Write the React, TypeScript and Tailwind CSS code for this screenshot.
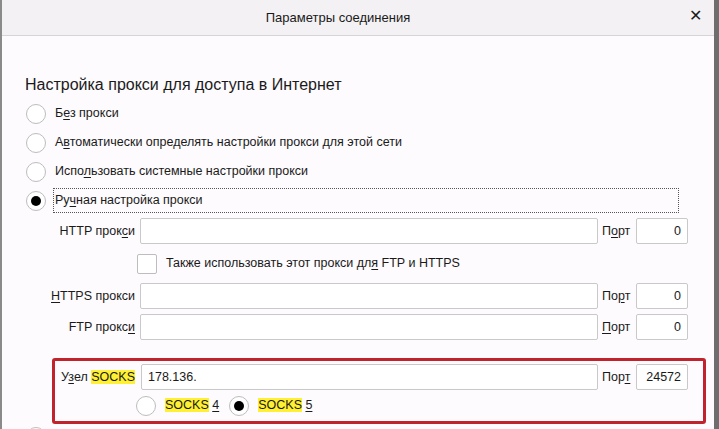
import React from 'react';

function U({ children }: { children: React.ReactNode }) {
  return <span className="underline underline-offset-2">{children}</span>;
}

function Hl({ children }: { children: React.ReactNode }) {
  return <span className="bg-[#fff033]">{children}</span>;
}

function Radio({ checked = false }: { checked?: boolean }) {
  return (
    <div className="w-[20px] h-[20px] rounded-full border border-[#bdbdbd] bg-white flex items-center justify-center shrink-0">
      {checked && <div className="w-[10px] h-[10px] rounded-full bg-black" />}
    </div>
  );
}

function Field({ label, port, value = '' }: { label: React.ReactNode; port: React.ReactNode; value?: string }) {
  return (
    <div className="flex items-center h-[26px]">
      <div className="w-[136px] text-right pr-[3px] whitespace-nowrap">{label}</div>
      <div className="ml-[2px] w-[458px] h-[26px] border border-[#c9c9c9] rounded-[2px] bg-white flex items-center px-[6px]">
        {value}
      </div>
      <div className="w-[38px] pl-[4px] whitespace-nowrap">{port}</div>
      <div className="w-[52px] h-[26px] border border-[#c9c9c9] rounded-[2px] bg-white flex items-center justify-end px-[6px]">
        0
      </div>
    </div>
  );
}

export default function App() {
  return (
    <div className="w-[719px] h-[429px] overflow-hidden flex flex-col bg-[#fdfbfd] text-[#1a1a1a] text-[12.5px] border-l-2 border-l-[#8a8a8a] border-r-[5px] border-r-[#6e6e6e] font-['Liberation_Sans',sans-serif]">
      <div className="h-[36px] shrink-0 bg-[#f3f1f3] border-b border-[#d6d4d6] relative flex items-center justify-center">
        <span className="text-[13px] -ml-[40px]">Параметры соединения</span>
        <span className="absolute right-[12px] top-[8px] text-[16px] leading-none">✕</span>
      </div>

      <div className="pt-[41px] pl-[23px] text-[16px] leading-[16px]">Настройка прокси для доступа в Интернет</div>

      <div className="mt-[6px] pl-[24px] flex flex-col">
        <div className="h-[29px] flex items-center gap-[9px]">
          <Radio />
          <span>Б<U>е</U>з прокси</span>
        </div>
        <div className="h-[29px] flex items-center gap-[9px]">
          <Radio />
          <span>А<U>в</U>томатически определять настройки прокси для этой сети</span>
        </div>
        <div className="h-[29px] flex items-center gap-[9px]">
          <Radio />
          <span>Испо<U>л</U>ьзовать системные настройки прокси</span>
        </div>
        <div className="h-[29px] flex items-center gap-[7px]">
          <Radio checked />
          <span className="w-[626px] h-[25px] flex items-center pl-[1px] border border-dotted border-[#555]">
            Ру<U>ч</U>ная настройка прокси
          </span>
        </div>
      </div>

      <div className="mt-[3px] flex flex-col">
        <Field label={<>HTTP прок<U>с</U>и</>} port={<>П<U>о</U>рт</>} />
        <div className="h-[39px] flex items-center pl-[135px] gap-[9px]">
          <div className="w-[20px] h-[20px] border border-[#bdbdbd] rounded-[2px] bg-white" />
          <span>Также использовать этот прокси дл<U>я</U> FTP и HTTPS</span>
        </div>
        <Field label={<><U>H</U>TTPS прокси</>} port={<>По<U>р</U>т</>} />
        <div className="h-[5px]" />
        <Field label={<>FTP прокс<U>и</U></>} port={<><U>П</U>орт</>} />
      </div>

      <div className="mt-[18px] ml-[50px] w-[654px] h-[66px] shrink-0 border-[3px] border-[#c0232b] rounded-[3px] flex flex-col pt-[3px]">
        <div className="flex items-center h-[26px]">
          <div className="w-[83px] text-right pr-[3px] whitespace-nowrap">
            У<U>з</U>ел <Hl>SOCKS</Hl>
          </div>
          <div className="ml-[3px] w-[457px] h-[26px] border border-[#c9c9c9] rounded-[2px] bg-white flex items-center px-[6px]">
            178.136.
          </div>
          <div className="w-[38px] pl-[4px] whitespace-nowrap">
            Пор<U>т</U>
          </div>
          <div className="w-[52px] h-[26px] border border-[#c9c9c9] rounded-[2px] bg-white flex items-center justify-end px-[6px]">
            24572
          </div>
        </div>
        <div className="flex items-center h-[31px] pl-[81px]">
          <Radio />
          <span className="ml-[9px]">
            <Hl>SOCKS</Hl> <U>4</U>
          </span>
          <div className="ml-[10px]">
            <Radio checked />
          </div>
          <span className="ml-[9px]">
            <Hl>SOCKS</Hl> <U>5</U>
          </span>
        </div>
      </div>

      <div className="mt-[3px] pl-[24px] shrink-0">
        <Radio />
      </div>
    </div>
  );
}
